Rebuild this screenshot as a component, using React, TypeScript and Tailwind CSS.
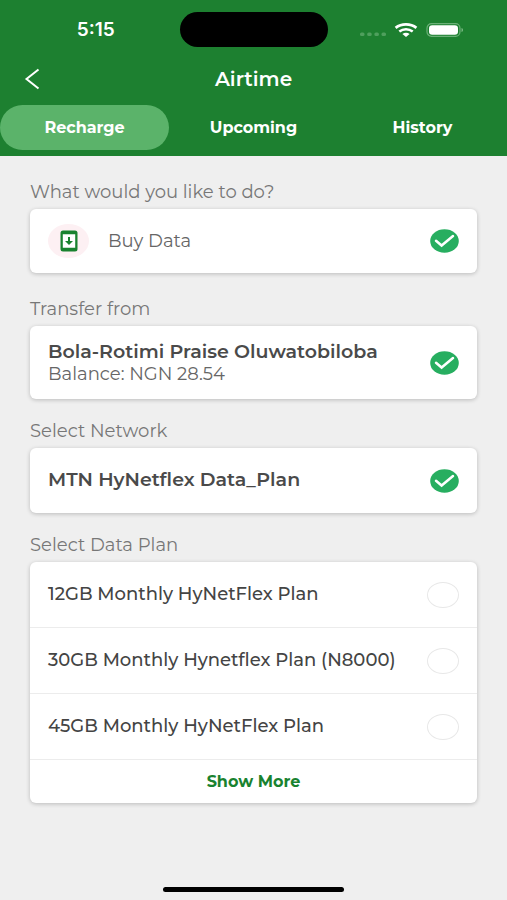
import { useState } from "react";
import type { ReactNode } from "react";

const tabs = ["Recharge", "Upcoming", "History"];

const plans = [
  "12GB Monthly HyNetFlex Plan",
  "30GB Monthly Hynetflex Plan (N8000)",
  "45GB Monthly HyNetFlex Plan",
];

function StatusBar() {
  return (
    <div className="grid grid-cols-[1fr_148px_1fr] items-center pt-3">
      <span className="pl-3 text-center font-[Inter,sans-serif] text-[19px] leading-6 font-semibold">5:15</span>
      <div className="h-[35px] rounded-full bg-black" />
      <div className="flex items-center pl-8">
        <svg width="26" height="14" viewBox="0 0 26 14" fill="#4f9f5d" aria-hidden="true">
          <rect x="0" y="9.500" width="4.500" height="3.400" rx="1.500" />
          <rect x="7.200" y="9.500" width="4.500" height="3.400" rx="1.500" />
          <rect x="14.400" y="9.500" width="4.500" height="3.400" rx="1.500" />
          <rect x="21.500" y="9.500" width="4.500" height="3.400" rx="1.500" />
        </svg>
        <svg className="ml-2" width="24" height="14" viewBox="0 0 24 14" fill="none" stroke="white" aria-hidden="true">
          <path d="M1.600 4.900C7.500 .300 16.500 .300 22.400 4.900" strokeWidth="2.800" />
          <path d="M5.300 8.500C9.200 5.500 14.800 5.500 18.700 8.500" strokeWidth="2.600" />
          <path d="M8.400 10.900C10.600 9.300 13.400 9.300 15.600 10.900L12 14Z" fill="white" stroke="none" />
        </svg>
        <svg className="ml-2" width="38" height="14" viewBox="0 0 38 14" aria-hidden="true">
          <rect x="1" y="0.700" width="33" height="12.600" rx="4.500" fill="none" stroke="#6bb077" strokeWidth="1.200" />
          <rect x="3" y="2.200" width="29" height="9.600" rx="3.200" fill="white" />
          <path d="M35.500 5c2 .600 2 3.400 0 4z" fill="#7ab883" />
        </svg>
      </div>
    </div>
  );
}

function CheckMark() {
  return (
    <svg className="shrink-0" width="29" height="24" viewBox="0 0 29 24" aria-hidden="true">
      <ellipse cx="14.500" cy="12" rx="14.300" ry="11.800" fill="#27ae60" />
      <path
        d="M6 11.800l5.600 4.700L23 7"
        fill="none"
        stroke="white"
        strokeWidth="2.500"
        strokeLinecap="round"
      />
    </svg>
  );
}

function DownloadIcon() {
  return (
    <span className="flex h-[34px] w-[41px] shrink-0 items-center justify-center rounded-[50%] bg-[#fdf0f3]">
      <svg width="18" height="22" viewBox="0 0 18 22" aria-hidden="true">
        <rect x="0.500" y="0.500" width="17" height="21" rx="2.500" fill="#19822f" />
        <path d="M2.800 4.200h12.400v13.600H2.800z" fill="white" />
        <path d="M8 7h2v4h3L9 15l-4-4h3z" fill="#19822f" />
      </svg>
    </span>
  );
}

function Section({ title, children }: { title: string; children: ReactNode }) {
  return (
    <section>
      <h2 className="mb-[5px] text-[18px] leading-6 text-[#777]">{title}</h2>
      <div className="overflow-hidden rounded-md bg-white shadow-[0_1px_4px_rgba(0,0,0,0.22)]">{children}</div>
    </section>
  );
}

export default function App() {
  const [activeTab, setActiveTab] = useState("Recharge");
  const [plan, setPlan] = useState("");

  return (
    <div className="flex min-h-screen flex-col bg-[#efefef] font-['Montserrat',Inter,sans-serif]">
      <header className="bg-[#1d8030] pb-1.5 text-white">
        <StatusBar />
        <div className="grid grid-cols-[1fr_auto_1fr] items-center pt-4 pb-2.5">
          <button type="button" aria-label="Go back" className="ml-6 w-4">
            <svg width="16" height="22" viewBox="0 0 16 22" fill="none" stroke="white" strokeWidth="2">
              <path d="M14.500 1.500L2.500 11l12 9.500" />
            </svg>
          </button>
          <h1 className="text-[20px] leading-8 font-semibold">Airtime</h1>
        </div>
        <nav className="grid grid-cols-3">
          {tabs.map((tab) => (
            <button
              key={tab}
              type="button"
              onClick={() => setActiveTab(tab)}
              className={`h-[45px] rounded-full text-[16px] font-bold ${activeTab === tab ? "bg-[#5bb36a]" : ""}`}
            >
              {tab}
            </button>
          ))}
        </nav>
      </header>

      <main className="flex flex-1 flex-col gap-5 px-[30px] pt-6">
        <Section title="What would you like to do?">
          <button type="button" className="flex h-16 w-full items-center px-[18px] text-left">
            <DownloadIcon />
            <span className="ml-[19px] flex-1 text-[18px] text-[#666]">Buy Data</span>
            <CheckMark />
          </button>
        </Section>

        <div className="pt-1">
          <Section title="Transfer from">
            <button type="button" className="flex h-[73px] w-full items-center px-[18px] text-left">
              <span className="flex-1">
                <span className="block text-[19px] leading-[22px] font-semibold text-[#4a4a4a]">
                  Bola-Rotimi Praise Oluwatobiloba
                </span>
                <span className="block text-[18px] leading-[22px] text-[#666]">Balance: NGN 28.54</span>
              </span>
              <CheckMark />
            </button>
          </Section>
        </div>

        <Section title="Select Network">
          <button type="button" className="flex h-[65px] w-full items-center px-[18px] text-left">
            <span className="flex-1 text-[19px] font-semibold text-[#4a4a4a]">MTN HyNetflex Data_Plan</span>
            <CheckMark />
          </button>
        </Section>

        <Section title="Select Data Plan">
          {plans.map((name) => (
            <label
              key={name}
              className="flex h-[66px] items-center border-b border-[#ececec] px-[18px] text-[18px] font-medium text-[#444]"
            >
              <span className="flex-1">{name}</span>
              <input
                type="radio"
                name="plan"
                checked={plan === name}
                onChange={() => setPlan(name)}
                className="h-[26px] w-8 shrink-0 appearance-none rounded-[50%] border border-[#e8e8e8] checked:bg-[#27ae60]"
              />
            </label>
          ))}
          <button type="button" className="h-[43px] w-full text-[16px] font-bold text-[#19822f]">
            Show More
          </button>
        </Section>
      </main>

      <footer className="flex justify-center pt-4 pb-2">
        <div className="h-[5px] w-[181px] rounded-full bg-black" />
      </footer>
    </div>
  );
}
